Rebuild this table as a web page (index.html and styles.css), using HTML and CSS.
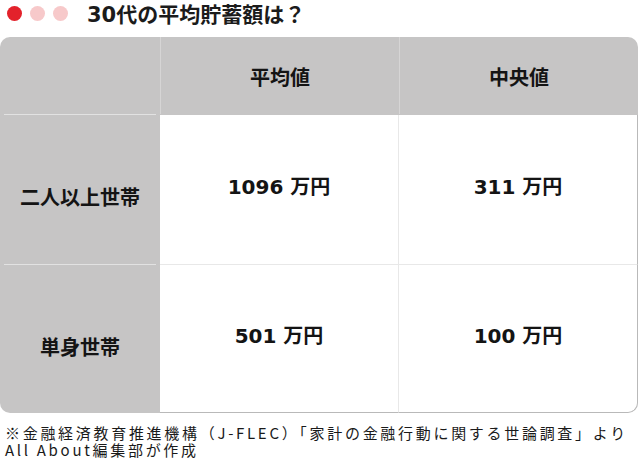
FILE: index.html
```html
<!DOCTYPE html>
<html lang="ja">
<head>
<meta charset="utf-8">
<link rel="stylesheet" href="styles.css">
</head>
<body>
<div class="top">
  <span class="dot dot-red"></span>
  <span class="dot dot-pink"></span>
  <span class="dot dot-pink"></span>
  <h1 class="title">30代の平均貯蓄額は？</h1>
</div>
<div class="table">
  <div class="corner"></div>
  <div class="colhead">平均値</div>
  <div class="colhead">中央値</div>
  <div class="rowhead">二人以上世帯</div>
  <div class="cell cell-mid">1096 万円</div>
  <div class="cell cell-end">311 万円</div>
  <div class="rowhead">単身世帯</div>
  <div class="cell cell-mid cell-low">501 万円</div>
  <div class="cell cell-end cell-low cell-last">100 万円</div>
</div>
<p class="note">※金融経済教育推進機構（J-FLEC）「家計の金融行動に関する世論調査」より<br>All About編集部が作成</p>
</body>
</html>
```

FILE: styles.css
```css
html, body {
  margin: 0;
  padding: 0;
  background: #ffffff;
}
body {
  width: 640px;
  height: 468px;
  overflow: hidden;
  font-family: "DejaVu Sans", "Noto Sans CJK JP", sans-serif;
  color: #141414;
}
.top {
  display: flex;
  align-items: center;
  height: 26px;
  padding-left: 7px;
  gap: 8px;
}
.dot {
  width: 15px;
  height: 15px;
  border-radius: 50%;
  flex: none;
}
.dot-red { background: #e3222b; }
.dot-pink { background: #f7c9ca; }
.title {
  margin: 0 0 0 11px;
  font-size: 21px;
  font-weight: bold;
  line-height: 26px;
  padding-top: 3px;
  color: #1b1b1b;
}
.table {
  margin-top: 11px;
  width: 638px;
  display: grid;
  grid-template-columns: 160px 239px 239px;
  grid-template-rows: 77px 150px 149px;
  background: #c6c5c5;
  border-radius: 10px;
  overflow: hidden;
  font-size: 20px;
  font-weight: bold;
}
.colhead {
  display: flex;
  align-items: center;
  justify-content: center;
  border-left: 1px solid #d6d5d5;
  padding-top: 2px;
}
.rowhead {
  margin: 0 4px 0 4px;
  border-top: 1px solid #e2e2e2;
  display: flex;
  align-items: center;
  justify-content: center;
  padding-top: 14px;
}
.cell {
  background: #ffffff;
  display: flex;
  align-items: center;
  justify-content: center;
  padding-bottom: 8px;
  margin-top: 1px;
}
.cell-mid {
  border-right: 1px solid #e8e8e8;
}
.cell-end {
  border-right: 1px solid #b9b9b9;
}
.cell-low {
  margin-top: 0;
  border-top: 1px solid #e8e8e8;
  border-bottom: 1px solid #b9b9b9;
}
.cell-last {
  border-bottom-right-radius: 10px;
}
.note {
  margin: 11px 0 0 5px;
  font-family: "Noto Sans CJK JP", sans-serif;
  font-size: 15px;
  line-height: 17px;
  letter-spacing: 2.7px;
  color: #1a1a1a;
  white-space: nowrap;
}
```
